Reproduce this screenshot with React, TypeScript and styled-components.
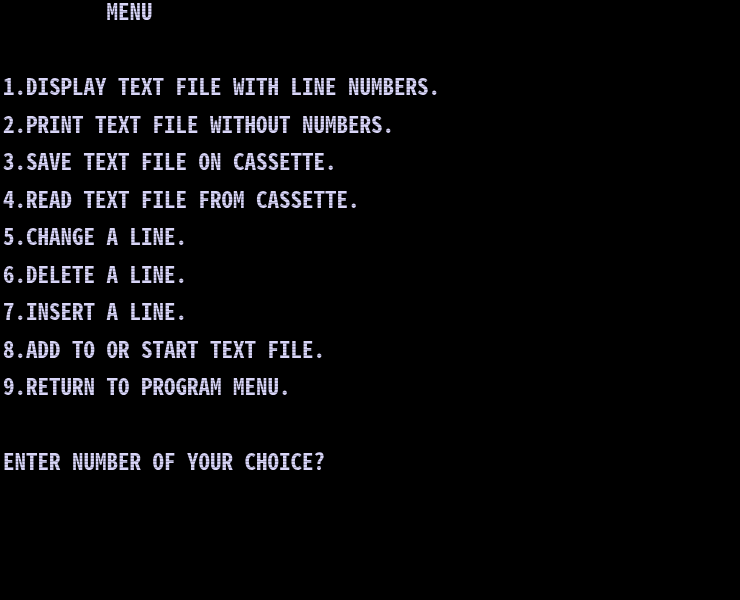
import React from "react";
import styled, { createGlobalStyle, css } from "styled-components";

const GlobalStyle = createGlobalStyle`
  * { box-sizing: border-box; }
  body { margin: 0; background: #000; }
`;

const phosphor = css`
  color: transparent;
  background: repeating-linear-gradient(#d9d6f8 0 2px, #a19fbc 2px 3px);
  background-clip: text;
  -webkit-background-clip: text;
`;

const Screen = styled.main`
  min-height: 100vh;
  padding: 0 3px;
  display: grid;
  grid-template-rows: repeat(16, minmax(20px, 1fr));
  background: #000;
  color: #d3d0f2;
  font-family: "Noto Sans Mono CJK JP", "Noto Sans CJK JP", "DejaVu Sans Mono", monospace;
  font-feature-settings: "hwid";
  font-size: 23px;
  font-weight: 700;
  line-height: 20px;
  white-space: pre;
`;

const Title = styled.h1`
  ${phosphor}
  grid-row: 1;
  margin: 0;
  padding-left: 9ch;
  font: inherit;
`;

const Choices = styled.ol`
  grid-row: 3 / span 9;
  display: grid;
  grid-template-rows: subgrid;
  margin: 0;
  padding: 0;
  list-style: none;
`;

const Choice = styled.li`
  ${phosphor}
  min-width: 0;
`;

const Prompt = styled.form`
  grid-row: 13;
  display: flex;
  align-items: stretch;
`;

const Question = styled.label`
  ${phosphor}
`;

const Answer = styled.input`
  flex: 1;
  min-width: 0;
  height: 20px;
  padding: 0;
  border: 0;
  outline: 0;
  background: transparent;
  color: inherit;
  font: inherit;
`;

const choices = [
  "DISPLAY TEXT FILE WITH LINE NUMBERS.",
  "PRINT TEXT FILE WITHOUT NUMBERS.",
  "SAVE TEXT FILE ON CASSETTE.",
  "READ TEXT FILE FROM CASSETTE.",
  "CHANGE A LINE.",
  "DELETE A LINE.",
  "INSERT A LINE.",
  "ADD TO OR START TEXT FILE.",
  "RETURN TO PROGRAM MENU.",
];

export default function App() {
  return (
    <>
      <GlobalStyle />
      <Screen>
        <Title>MENU</Title>
        <Choices>
          {choices.map((text, index) => (
            <Choice key={text}>{`${index + 1}.${text}`}</Choice>
          ))}
        </Choices>
        <Prompt onSubmit={(event) => event.preventDefault()}>
          <Question htmlFor="choice">ENTER NUMBER OF YOUR CHOICE?</Question>
          <Answer id="choice" inputMode="numeric" maxLength={1} autoComplete="off" />
        </Prompt>
      </Screen>
    </>
  );
}
